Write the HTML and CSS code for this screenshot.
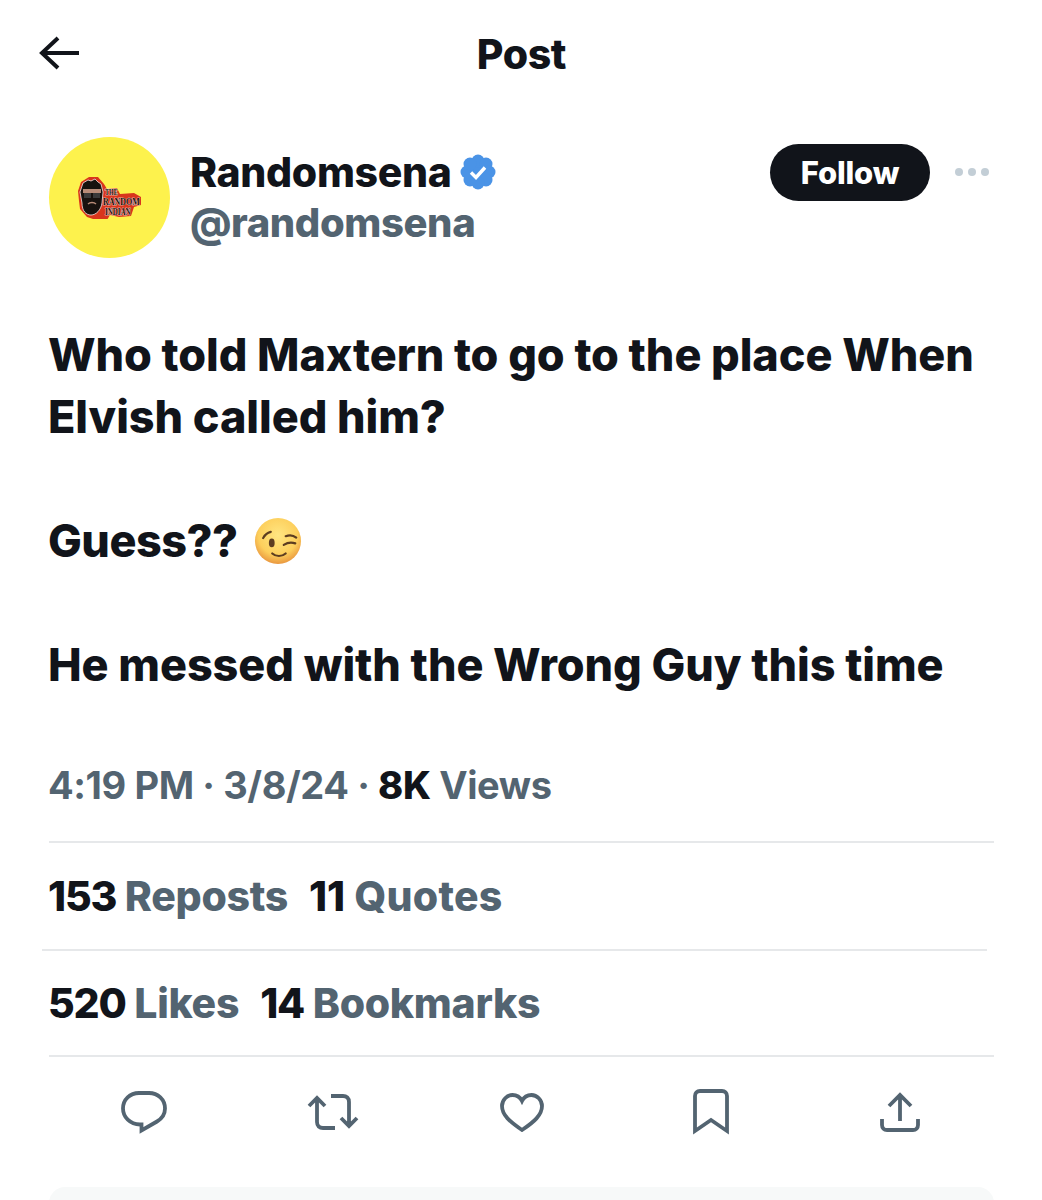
FILE: index.html
```html
<!DOCTYPE html>
<html lang="en">
<head>
<meta charset="UTF-8" />
<title>Post</title>
<link rel="stylesheet" href="styles.css">
</head>
<body>
<div class="page">
  <!-- Top bar -->
  <header class="topbar">
    <svg class="back" viewBox="0 0 42 36" width="42" height="36"><path d="M41 18H4M20 3 4 18l16 15" fill="none" stroke="#11141a" stroke-width="4"/></svg>
    <h1>Post</h1>
  </header>

  <!-- Author -->
  <div class="author">
    <div class="avatar">
      <svg class="logo" viewBox="0 0 64 42" width="64" height="42">
        <path d="M0 14 3 5l8-5h9l6 7 3 5 10-1 3 6 14-1 7 4v8l-7 2-3 9-12 1-9-2-3 5-9 1-5-2-6-2-7-8-1-8z" fill="#d8361c"/>
        <path d="M2 15 5 6l5-3 3 1 4-2 3 3 3 2 2 8-1 11c-1 7-6 12-11 12S4 34 4 26z" fill="#17120f" stroke="#fff" stroke-width=".7"/>
        <rect x="5" y="12" width="18" height="4" fill="#b88c78"/>
        <rect x="6" y="16" width="7" height="5" fill="#3a3a3a"/>
        <rect x="15" y="16" width="7" height="5" fill="#3a3a3a"/>
        <path d="M10 27c2-2 6-2 8 0" fill="none" stroke="#b88c78" stroke-width="1.400"/>
        <text class="logo-text" transform="translate(27 18) scale(1 1.3)" font-size="6">THE</text>
        <text class="logo-text" transform="translate(25 27.500) scale(1 1.25)" font-size="8">RANDOM</text>
        <text class="logo-text" transform="translate(27 38) scale(1 1.35)" font-size="7">INDIAN</text>
      </svg>
    </div>
    <div class="names">
      <div class="name-row">
        <span class="name">Randomsena</span>
        <svg class="badge" viewBox="0 0 36 36" width="36" height="36">
          <g fill="#4a93e6">
            <circle cx="18" cy="18" r="14"/>
            <circle cx="18" cy="7" r="6.500"/>
            <circle cx="26" cy="10" r="6.500"/>
            <circle cx="29" cy="18" r="6.500"/>
            <circle cx="26" cy="26" r="6.500"/>
            <circle cx="18" cy="29" r="6.500"/>
            <circle cx="10" cy="26" r="6.500"/>
            <circle cx="7" cy="18" r="6.500"/>
            <circle cx="10" cy="10" r="6.500"/>
          </g>
          <path d="M11 18.500l5 5 9-10" fill="none" stroke="#fff" stroke-width="3.400"/>
        </svg>
      </div>
      <div class="handle">@randomsena</div>
    </div>
    <button class="follow">Follow</button>
    <div class="more"><i></i><i></i><i></i></div>
  </div>

  <!-- Post text -->
  <div class="post-text">
    <p>Who told Maxtern to go to the place When Elvish called him?</p>
    <p class="guess">Guess??
      <svg class="emoji" viewBox="0 0 50 50" width="48" height="48">
        <defs>
          <radialGradient id="face" cx="50%" cy="38%" r="62%">
            <stop offset="0%" stop-color="#ffe682"/>
            <stop offset="68%" stop-color="#fdcf5c"/>
            <stop offset="100%" stop-color="#e9973f"/>
          </radialGradient>
        </defs>
        <circle cx="25" cy="25" r="24" fill="url(#face)"/>
        <ellipse cx="18.500" cy="27" rx="3" ry="4.500" fill="#5d3d20"/>
        <path d="M9.500 22c1.500-3 4-5.500 8-6.500M33 20c4-1.500 8-1 11 1.500M31 29c4-2.500 8-3 12-1.500M19 38c4 3.500 10 3.500 14 0" fill="none" stroke="#5d3d20" stroke-width="2.300" stroke-linecap="round"/>
      </svg>
    </p>
    <p>He messed with the Wrong Guy this time</p>
  </div>

  <!-- Timestamp -->
  <div class="meta">4:19 PM · 3/8/24 · <b>8K</b> Views</div>
  <div class="rule"></div>

  <!-- Counts -->
  <div class="counts"><span><b>153</b> Reposts</span><span class="quotes"><b>11</b> Quotes</span></div>
  <div class="rule shifted"></div>
  <div class="counts likes"><span><b>520</b> Likes</span><span><b>14</b> Bookmarks</span></div>
  <div class="rule"></div>

  <!-- Actions -->
  <div class="actions">
    <svg viewBox="0 0 46 43" width="46" height="43"><path d="M19 33.500C9 33.500 2 26 2 17.500 2 8.500 9 2 18 2h10c9 0 16 6.500 16 15.500 0 6-3 10-8 13L20.500 39.500v-6z" fill="none" stroke="#536471" stroke-width="3.800"/></svg>
    <svg viewBox="0 0 54 36" width="54" height="36"><path d="M11 4v24c0 4 2.500 6 6 6h12M3 12l8-8 8 8M25 2h12c3.500 0 6 2 6 6v24M35 24l8 8 8-8" fill="none" stroke="#536471" stroke-width="3.800"/></svg>
    <svg viewBox="0 0 44 39" width="44" height="39"><path d="M22 37C10 29 2 22 2 13 2 7 7 2 12.500 2 16.500 2 20 4 22 8c2-4 5.500-6 9.500-6C37 2 42 7 42 13c0 9-8 16-20 24z" fill="none" stroke="#536471" stroke-width="3.800"/></svg>
    <svg viewBox="0 0 36 46" width="36" height="46"><path d="M2 7c0-3 2-5 5-5h22c3 0 5 2 5 5v35L18 31 2 42z" fill="none" stroke="#536471" stroke-width="3.800"/></svg>
    <svg viewBox="0 0 40 40" width="40" height="40"><path d="M20 29V4M9 14 20 3l11 11M2 27v6c0 3 2 5 5 5h26c3 0 5-2 5-5v-6" fill="none" stroke="#536471" stroke-width="3.800"/></svg>
  </div>

  <div class="next-card"></div>
</div>
</body>
</html>
```

FILE: styles.css
```css
/* Reset & base */
* {
  box-sizing: border-box;
}
body {
  margin: 0;
  height: 1200px;
  overflow: hidden;
  background: #fff;
  font-family: Inter, "Liberation Sans", sans-serif;
  color: #11141a;
}

.page {
  padding: 0 48px 0 49px;
}

.topbar {
  height: 107px;
  display: flex;
  align-items: center;
  justify-content: center;
  position: relative;
}

.back {
  position: absolute;
  left: -11px;
  top: 35px;
}

.topbar h1 {
  margin: 0;
  font-size: 41px;
  font-weight: 800;
  letter-spacing: -.4px;
}

/* Author row */
.author {
  display: flex;
  align-items: flex-start;
  padding-top: 30px;
  height: 217px;
}

.avatar {
  width: 121px;
  height: 121px;
  border-radius: 50%;
  background: #fdf24d;
  display: flex;
  align-items: center;
  justify-content: center;
  flex: none;
}

.logo-text {
  font-family: "Liberation Serif", serif;
  font-weight: 700;
  fill: #24120c;
  stroke: #fff;
  stroke-width: .5;
  paint-order: stroke;
}

.names {
  margin-left: 20px;
  flex: 1;
  padding-top: 7px;
}

.name-row {
  display: flex;
  align-items: center;
  gap: 9px;
  height: 56px;
}

.name {
  font-size: 41px;
  font-weight: 800;
  letter-spacing: -.35px;
}

.handle {
  font-size: 40px;
  font-weight: 800;
  letter-spacing: -.4px;
  color: #536471;
  line-height: 46px;
}

.follow {
  width: 160px;
  height: 57px;
  margin-top: 7px;
  border: none;
  border-radius: 29px;
  background: #11141a;
  color: #fff;
  font-family: inherit;
  font-size: 31px;
  font-weight: 800;
  letter-spacing: -.2px;
}

.more {
  display: flex;
  gap: 5px;
  margin: 31px 5px 0 25px;
}

.more i {
  width: 8px;
  height: 8px;
  border-radius: 50%;
  background: #c3ced6;
}

/* Post body */
.post-text {
  margin-left: -1px;
  font-size: 45px;
  font-weight: 800;
  letter-spacing: -.08px;
  line-height: 62px;
}

.post-text p {
  margin: 0 0 62px;
}

.post-text p:last-child {
  margin-bottom: 66px;
}

.guess {
  display: flex;
  align-items: center;
  gap: 16px;
  letter-spacing: -.5px;
}

.meta {
  margin-left: -1px;
  font-size: 38px;
  font-weight: 700;
  letter-spacing: -.4px;
  line-height: 46px;
  color: #536471;
  height: 79px;
}

.meta b,
.counts b {
  color: #11141a;
  font-weight: 800;
}

.counts {
  display: flex;
  gap: 21px;
  align-items: center;
  height: 106px;
  margin-left: -1px;
  font-size: 41px;
  font-weight: 800;
  letter-spacing: -.3px;
  color: #536471;
}

.counts b {
  letter-spacing: -1.2px;
}

.counts .quotes {
  letter-spacing: .2px;
}

.counts .quotes b {
  letter-spacing: 0;
}

.counts.likes {
  height: 104px;
}

.rule {
  height: 2px;
  background: #e6e8ea;
}

.rule.shifted {
  margin: 0 7px 0 -7px;
}

.actions {
  display: grid;
  grid-template-columns: repeat(5, 1fr);
  justify-items: center;
  align-items: center;
  height: 46px;
  margin-top: 32px;
}

.next-card {
  margin-top: 52px;
  height: 60px;
  border-radius: 16px;
  background: #f7f9f9;
}
```
